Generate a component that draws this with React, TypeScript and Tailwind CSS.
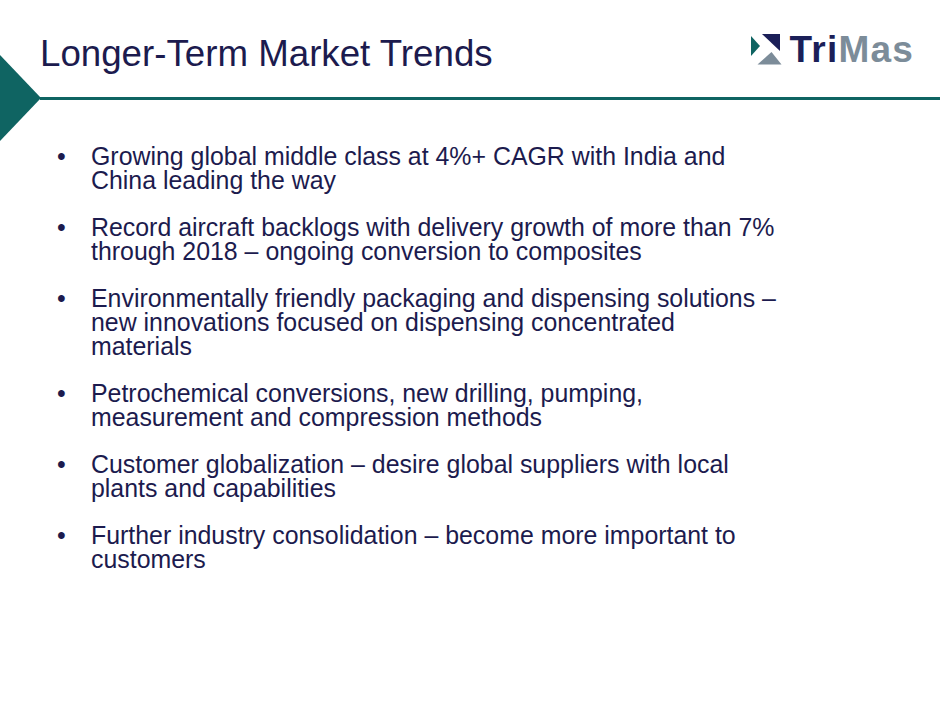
import React from "react";

const bullets: React.ReactNode[] = [
  <>Growing global middle class at 4%+ CAGR with India and<br />China leading the way</>,
  <>Record aircraft backlogs with delivery growth of more than 7%<br />through 2018 – ongoing conversion to composites</>,
  <>Environmentally friendly packaging and dispensing solutions –<br />new innovations focused on dispensing concentrated<br />materials</>,
  <>Petrochemical conversions, new drilling, pumping,<br />measurement and compression methods</>,
  <>Customer globalization – desire global suppliers with local<br />plants and capabilities</>,
  <>Further industry consolidation – become more important to<br />customers</>,
];

function LogoMark() {
  return (
    <svg width="36" height="32" viewBox="748 34 36 32" className="block">
      <polygon points="750,36 750,56 759,46" fill="#0f6462" />
      <polygon points="761,34 779,34 779,51" fill="#1b1f58" />
      <polygon points="756.5,64.5 770.5,52 780.5,64.5" fill="#7c8c99" />
    </svg>
  );
}

export default function App() {
  return (
    <div
      className="relative w-[940px] h-[705px] bg-white overflow-hidden"
      style={{ fontFamily: '"Liberation Sans", Arial, sans-serif' }}
    >
      {/* decorative triangle */}
      <svg className="absolute left-0 top-[55px]" width="41" height="86" viewBox="0 0 41 86">
        <polygon points="0,0 41,43 0,86" fill="#0f6462" />
      </svg>

      {/* header */}
      <div className="flex justify-between h-[97px]">
        <h1 className="ml-[40px] mt-[35px] text-[36.7px] leading-[37px] text-[#1c1b4e]">
          Longer-Term Market Trends
        </h1>
        <div className="flex items-start mt-[34px] mr-[26px]">
          <LogoMark />
          <div className="ml-[5px] -mt-[3px] text-[37px] leading-[37px] font-bold tracking-[1.2px]">
            <span className="text-[#1b1f58]">Tri</span>
            <span className="text-[#7c8c99]">Mas</span>
          </div>
        </div>
      </div>
      <div className="ml-[40px] h-[3px] bg-[#0f6462]" />

      {/* bullets */}
      <div className="mt-[44px] pl-[57px] flex flex-col gap-[23px] text-[24.9px] leading-[24px] text-[#1c1b4e]">
        {bullets.map((b, i) => (
          <div key={i} className="flex">
            <span className="w-[34px] shrink-0">•</span>
            <span className="whitespace-nowrap">{b}</span>
          </div>
        ))}
      </div>
    </div>
  );
}
